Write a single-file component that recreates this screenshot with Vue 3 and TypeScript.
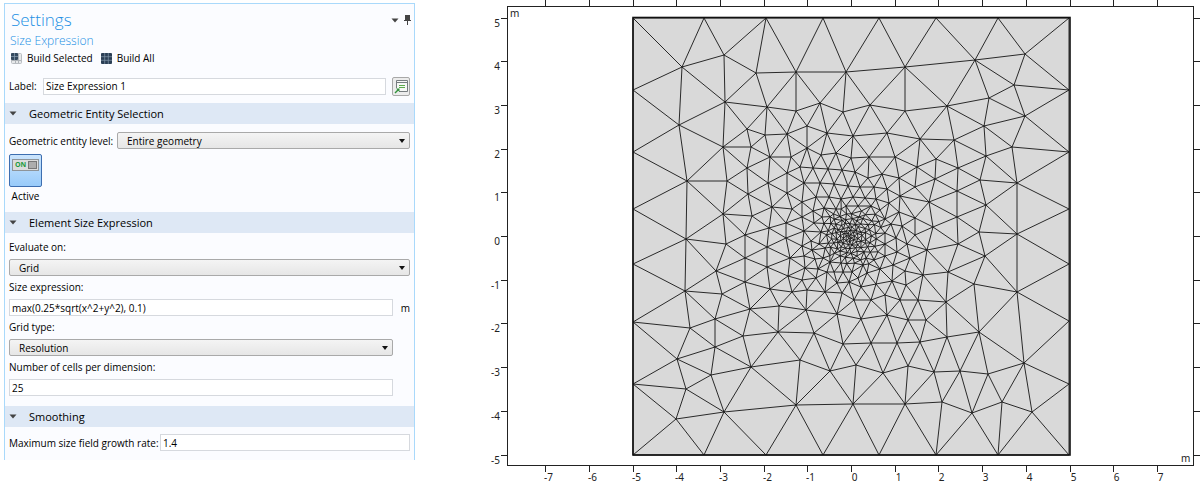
<script setup lang="ts">
import { ref } from 'vue'

type Point = [number, number]

const label = ref('Size Expression 1')
const level = ref('Entire geometry')
const evaluateOn = ref('Grid')
const expression = ref('max(0.25*sqrt(x^2+y^2), 0.1)')
const gridType = ref('Resolution')
const cells = ref('25')
const growthRate = ref('1.4')
const active = ref(true)

const unit = 43.7
const origin: Point = [851, 236]
const yTicks = [5, 4, 3, 2, 1, 0, -1, -2, -3, -4, -5]
const xTicks = [-7, -6, -5, -4, -3, -2, -1, 0, 1, 2, 3, 4, 5, 6, 7]
const tickX = (v: number) => Math.round(origin[0] + v * unit) + 0.5
const tickY = (v: number) => Math.round(origin[1] - v * unit) + 0.5

// Mesh nodes on the boundary of the square and in the coarse part of the domain.
const nodes: Point[] = [
  [633, 18], [704, 18], [766, 18], [823, 18], [879, 18], [936, 18], [998, 18], [1069, 18],
  [633, 90], [633, 152], [633, 209], [633, 264], [633, 322], [633, 384], [633, 455],
  [1069, 90], [1069, 152], [1069, 209], [1069, 264], [1069, 321], [1069, 384], [1069, 455],
  [704, 455], [766, 455], [823, 455], [879, 455], [936, 455], [998, 455],
  [682, 67], [724, 55], [756, 73], [796, 72], [846, 72], [725, 102], [679, 125], [767, 107],
  [796, 111], [820, 103], [843, 112], [747, 129], [765, 135], [787, 134], [807, 126], [827, 133],
  [853, 136], [723, 147], [751, 147], [770, 157], [791, 157], [807, 148], [821, 155], [836, 153], [851, 158],
  [905, 67], [975, 60], [1025, 54], [870, 105], [905, 111], [947, 106], [989, 98], [1014, 85],
  [1025, 116], [984, 126], [887, 133], [920, 139], [954, 140], [1012, 147], [986, 156],
  [869, 157], [895, 157], [936, 159],
  [687, 181], [727, 181], [747, 168], [768, 183], [748, 194], [723, 214], [752, 216], [772, 207],
  [686, 239], [726, 244], [745, 235], [769, 228], [767, 247], [745, 258], [716, 271], [767, 267],
  [745, 282], [685, 291], [722, 294], [770, 289], [750, 309], [715, 319], [779, 306],
  [958, 168], [935, 179], [980, 180], [1017, 183], [957, 191], [929, 202], [986, 205], [957, 217],
  [933, 227], [979, 232], [1017, 234], [958, 244], [985, 256], [948, 272], [974, 284], [1017, 292], [946, 302],
  [690, 328], [715, 347], [743, 336], [778, 332], [814, 333], [837, 314], [843, 344], [677, 359],
  [711, 375], [751, 367], [800, 360], [830, 371], [856, 365], [686, 389], [724, 412], [676, 419],
  [796, 405], [853, 404], [861, 319], [887, 315], [908, 320], [926, 320], [871, 343], [897, 343],
  [920, 342], [947, 337], [979, 332], [1024, 363], [883, 373], [908, 366], [934, 372], [960, 371],
  [988, 374], [905, 404], [942, 402], [1002, 402], [972, 413], [1032, 412],
  [787, 173], [800, 167], [813, 168], [828, 169], [842, 170], [855, 172], [868, 178], [882, 174],
  [899, 178], [917, 167], [804, 183], [787, 193], [820, 183], [834, 184], [848, 186], [860, 187],
  [874, 187], [887, 189], [915, 187], [900, 196], [792, 209], [802, 202], [816, 197], [829, 197],
  [841, 199], [853, 197], [865, 198], [876, 199], [889, 203], [899, 212], [915, 218], [786, 223],
  [802, 217], [813, 211], [824, 208], [836, 209], [846, 206], [858, 206], [871, 206], [880, 210],
  [786, 238], [804, 231], [814, 223], [822, 217], [885, 219], [891, 224], [902, 226], [896, 238],
  [885, 233], [915, 235], [927, 250], [907, 244], [897, 252], [885, 244], [885, 256], [910, 258],
  [923, 275], [802, 246], [811, 241], [790, 258], [804, 256], [812, 250], [788, 276], [805, 268],
  [815, 259], [823, 258], [802, 280], [816, 278], [792, 292], [807, 290], [825, 292], [806, 310],
  [854, 300], [842, 293], [837, 283], [849, 282], [871, 300], [861, 287], [885, 295], [876, 284],
  [892, 281], [900, 300], [918, 300], [906, 285], [905, 271], [893, 265], [880, 269], [867, 273],
  [818, 269], [830, 262], [827, 272], [834, 272], [843, 272], [841, 263], [852, 272], [858, 278],
  [874, 260], [863, 265], [821, 232], [819, 244],
]

// Refined nodes around the origin: rings whose spacing grows with the radius.
const centre: Point = [849, 236]
const refine = (base: Point[]): Point[] => {
  const out = [...base]
  let radius = 0
  let ring = 0
  while (radius < 36) {
    const size = 3.1 + radius * 0.14
    const count = radius === 0 ? 1 : Math.round((2 * Math.PI * radius) / size)
    for (let i = 0; i < count; i++) {
      const wobble = 0.18 * Math.sin(i * 2.7 + ring * 1.9)
      const angle = ((i + ring * 0.5 + wobble) / count) * 2 * Math.PI
      const r = radius + size * 0.1 * Math.sin(i * 4.1 + ring)
      const p: Point = [centre[0] + r * Math.cos(angle), centre[1] + r * Math.sin(angle)]
      if (base.every((q) => Math.hypot(q[0] - p[0], q[1] - p[1]) > size * 0.75)) out.push(p)
    }
    radius += size * 0.87
    ring++
  }
  return out
}

interface Triangle { v: [number, number, number]; cx: number; cy: number; rr: number }

// Incremental Delaunay triangulation; returns the path of all unique edges.
const meshPath = (input: Point[]): string => {
  const n = input.length
  const pts: Point[] = [...input, [-20000, -20000], [22000, -20000], [850, 40000]]
  const make = (a: number, b: number, c: number): Triangle => {
    const [ax, ay] = pts[a]
    const bx = pts[b][0] - ax
    const by = pts[b][1] - ay
    const dx = pts[c][0] - ax
    const dy = pts[c][1] - ay
    const d = 2 * (bx * dy - by * dx) || 1e-9
    const ux = (dy * (bx * bx + by * by) - by * (dx * dx + dy * dy)) / d
    const uy = (bx * (dx * dx + dy * dy) - dx * (bx * bx + by * by)) / d
    return { v: [a, b, c], cx: ax + ux, cy: ay + uy, rr: ux * ux + uy * uy }
  }
  let tris: Triangle[] = [make(n, n + 1, n + 2)]
  for (let i = 0; i < n; i++) {
    const [x, y] = pts[i]
    const edges = new Map<string, Point>()
    const keep: Triangle[] = []
    for (const t of tris) {
      if ((x - t.cx) ** 2 + (y - t.cy) ** 2 < t.rr - 1e-7) {
        for (let k = 0; k < 3; k++) {
          const a = t.v[k]
          const b = t.v[(k + 1) % 3]
          const key = a < b ? `${a}_${b}` : `${b}_${a}`
          if (edges.has(key)) edges.delete(key)
          else edges.set(key, [a, b])
        }
      } else keep.push(t)
    }
    edges.forEach(([a, b]) => keep.push(make(a, b, i)))
    tris = keep
  }
  const seen = new Set<string>()
  let d = ''
  for (const t of tris) {
    if (t.v.some((k) => k >= n)) continue
    for (let k = 0; k < 3; k++) {
      const a = Math.min(t.v[k], t.v[(k + 1) % 3])
      const b = Math.max(t.v[k], t.v[(k + 1) % 3])
      const key = `${a}_${b}`
      if (seen.has(key)) continue
      seen.add(key)
      d += `M${pts[a][0].toFixed(1)} ${pts[a][1].toFixed(1)}L${pts[b][0].toFixed(1)} ${pts[b][1].toFixed(1)}`
    }
  }
  return d
}

const mesh = meshPath(refine(nodes))
</script>

<template>
  <main class="workspace">
    <section class="panel">
      <header class="head">
        <h1>Settings</h1>
        <div class="tools">
          <button type="button" aria-label="Panel menu">
            <svg width="8" height="5" viewBox="0 0 8 5"><path d="M0.5 0.5h7L4 4.5z" fill="#444" /></svg>
          </button>
          <button type="button" aria-label="Pin panel">
            <svg width="7" height="10" viewBox="0 0 7 10"><path d="M1 0h5v5h1v1H4v4H3V6H0V5h1z" fill="#444" /></svg>
          </button>
        </div>
      </header>
      <h2>Size Expression</h2>
      <div class="actions">
        <button type="button">
          <svg width="11" height="11" viewBox="0 0 11 11">
            <rect x="0.5" y="0.5" width="10" height="10" rx="1" fill="#e6e8ea" stroke="#b9bdc2" />
            <path d="M4 7.5h6M7.5 1v9M1 7.5h3M4.5 7v3" stroke="#aeb3b8" />
            <rect width="7" height="7" rx="1" fill="#34495e" />
            <path d="M3.5 0v7M0 3.5h7" stroke="#8ca0b4" stroke-width="0.7" />
          </svg>
          Build Selected
        </button>
        <button type="button">
          <svg width="11" height="11" viewBox="0 0 11 11">
            <rect width="11" height="11" rx="1" fill="#2b3f55" />
            <path d="M3.7 0v11M7.3 0v11M0 3.7h11M0 7.3h11" stroke="#8497ab" stroke-width="0.7" />
          </svg>
          Build All
        </button>
      </div>
      <div class="row label-row">
        <label for="label">Label:</label>
        <input id="label" v-model="label" type="text" />
        <button class="square" type="button" aria-label="Show name and label">
          <svg width="15" height="15" viewBox="0 0 15 15">
            <path d="M2.5 9V1.5h11v11H5" fill="#f6f8f6" stroke="#777d80" />
            <path d="M2.5 3.5h11" stroke="#777d80" />
            <path d="M5 6.5h6M5 8.5h6" stroke="#5cab4c" />
            <path d="M1 14l3.5-3.5" stroke="#33913c" stroke-width="1.4" />
            <path d="M2 9.5h3.5V13z" fill="#33913c" />
          </svg>
        </button>
      </div>

      <h3><svg width="8" height="5" viewBox="0 0 8 5"><path d="M0.5 0.5h7L4 4.5z" fill="#444" /></svg>Geometric Entity Selection</h3>
      <div class="row level-row">
        <label for="level">Geometric entity level:</label>
        <span class="select">
          <select id="level" v-model="level"><option>Entire geometry</option></select>
        </span>
      </div>
      <div class="toggle">
        <button id="active" type="button" :aria-pressed="active" aria-labelledby="active-label" @click="active = !active">
          <span class="switch"><b>ON</b><i></i></span>
        </button>
        <label id="active-label" for="active">Active</label>
      </div>

      <h3><svg width="8" height="5" viewBox="0 0 8 5"><path d="M0.5 0.5h7L4 4.5z" fill="#444" /></svg>Element Size Expression</h3>
      <div class="fields">
        <label for="evaluate">Evaluate on:</label>
        <span class="select">
          <select id="evaluate" v-model="evaluateOn"><option>Grid</option></select>
        </span>
        <label for="expression">Size expression:</label>
        <div class="with-unit">
          <input id="expression" v-model="expression" type="text" />
          <span>m</span>
        </div>
        <label for="grid-type">Grid type:</label>
        <span class="select inset">
          <select id="grid-type" v-model="gridType"><option>Resolution</option></select>
        </span>
        <label for="cells">Number of cells per dimension:</label>
        <div class="inset"><input id="cells" v-model="cells" type="text" /></div>
      </div>

      <h3><svg width="8" height="5" viewBox="0 0 8 5"><path d="M0.5 0.5h7L4 4.5z" fill="#444" /></svg>Smoothing</h3>
      <div class="row rate-row">
        <label for="rate">Maximum size field growth rate:</label>
        <input id="rate" v-model="growthRate" type="text" />
      </div>
    </section>

    <svg class="plot" viewBox="480 0 720 481" role="img" aria-label="Mesh plot">
      <rect x="633" y="18" width="436" height="437" fill="#d9d9d9" />
      <path :d="mesh" class="mesh" />
      <rect x="633" y="17.5" width="437" height="437.5" class="outline" />
      <rect x="507.5" y="6.5" width="686" height="459" class="frame" />
      <g v-for="v in yTicks" :key="`y${v}`">
        <path :d="`M501 ${tickY(v)}h6M1194 ${tickY(v)}h6`" class="frame" />
        <text x="500" :y="tickY(v) + 8" text-anchor="end">{{ v }}</text>
      </g>
      <g v-for="v in xTicks" :key="`x${v}`">
        <path :d="`M${tickX(v)} 0v6M${tickX(v)} 466v6`" class="frame" />
        <text :x="tickX(v) + 3" y="481" text-anchor="middle">{{ v }}</text>
      </g>
      <text x="510" y="17">m</text>
      <text x="1181" y="462">m</text>
    </svg>
  </main>
</template>

<style>
body {
  background: #fff;
}
</style>

<style scoped>
.workspace {
  display: grid;
  grid-template-columns: minmax(0, 411fr) minmax(0, 720fr);
  column-gap: 65px;
  align-items: start;
  padding-left: 4px;
  font-family: "Open Sans", "Noto Sans", sans-serif;
  font-size: 10px;
  line-height: 16px;
  color: #000;
}
.panel {
  box-sizing: border-box;
  margin-top: 3px;
  padding-bottom: 9px;
  border: 1px solid #a9d9fb;
  border-bottom: 0;
  background: #fbfcff;
}
.panel button,
.panel input,
.panel select {
  box-sizing: border-box;
  font: inherit;
  color: inherit;
}
.panel button {
  padding: 0;
  border: 0;
  background: none;
}
.panel svg {
  display: block;
  flex: none;
}
.head {
  display: flex;
  justify-content: space-between;
  padding: 4px 3px 0 6px;
}
h1,
h2,
h3 {
  margin: 0;
  font-weight: 400;
}
h1 {
  font-size: 17px;
  line-height: 24px;
  font-weight: 300;
  color: #2390e4;
}
h2 {
  padding-left: 5px;
  font-size: 12px;
  line-height: 18px;
  font-weight: 300;
  color: #2390e4;
}
.tools {
  display: flex;
  align-items: center;
  gap: 5px;
}
.actions {
  display: flex;
  gap: 8px;
  padding-left: 6px;
}
.actions button {
  display: flex;
  align-items: center;
  gap: 5px;
  height: 16px;
}
.row {
  display: flex;
  align-items: center;
  padding: 0 4px;
}
.row label {
  flex: none;
}
.row input,
.row .select {
  flex: 1;
  min-width: 0;
}
.label-row {
  gap: 6px;
  margin: 10px 0 7px;
  height: 20px;
}
.label-row label {
  width: 28px;
}
.panel .square {
  display: grid;
  place-items: center;
  width: 18px;
  height: 19px;
  border: 1px solid #a8a8a8;
  border-radius: 2px;
  background: #ececec;
}
input {
  display: block;
  width: 100%;
  height: 17px;
  padding: 0 2px;
  border: 1px solid #d6d9de;
  background: #fff;
}
h3 {
  display: flex;
  align-items: center;
  gap: 12px;
  height: 21px;
  padding-left: 4px;
  font-size: 11px;
  background: #dee8f5;
}
.select {
  position: relative;
  display: block;
}
.select::after {
  content: "";
  position: absolute;
  right: 5px;
  top: 7px;
  border: 3px solid transparent;
  border-top: 4px solid #111;
  border-bottom: 0;
  pointer-events: none;
}
select {
  display: block;
  width: 100%;
  height: 17px;
  padding: 0 9px;
  border: 1px solid #a9a9a9;
  border-radius: 2px;
  background: linear-gradient(#f4f4f4, #e6e6e6);
  appearance: none;
  line-height: 14px;
}
.level-row {
  gap: 6px;
  padding-top: 8px;
}
.level-row label {
  width: 102px;
  white-space: nowrap;
}
.toggle {
  width: 33px;
  margin: 5px 0 8px 4px;
  text-align: center;
}
.toggle button {
  display: flex;
  align-items: flex-start;
  width: 33px;
  height: 33px;
  margin-bottom: 1px;
  padding: 4px 2px;
  border: 1px solid #3d6eb0;
  border-radius: 2px;
  background: linear-gradient(#cbe4fc, #98cbfa);
}
.toggle label {
  display: block;
}
.switch {
  display: flex;
  align-items: center;
  justify-content: space-between;
  flex: 1;
  box-sizing: border-box;
  height: 12px;
  padding: 1px 1px 1px 2px;
  border: 1px solid #8e9499;
  background: #dcdcdc;
}
.switch b {
  font-size: 7px;
  line-height: 8px;
  color: #1d9b40;
}
.switch i {
  box-sizing: border-box;
  width: 9px;
  height: 8px;
  border: 1px solid #777;
  background: #adadad;
}
.fields {
  padding: 6px 4px 7px;
}
.fields label {
  display: block;
}
.fields .select,
.fields .with-unit,
.fields .inset {
  margin: 4px 0 3px;
}
.with-unit {
  display: flex;
  align-items: center;
  justify-content: space-between;
  height: 17px;
}
.with-unit input {
  width: calc(100% - 17px);
}
.fields .inset {
  margin-right: 17px;
}
.rate-row {
  gap: 3px;
  padding-top: 7px;
}
.rate-row label {
  width: 148px;
  white-space: nowrap;
}
.plot {
  display: block;
  width: 100%;
  height: auto;
}
.plot text {
  font-family: "Noto Sans", sans-serif;
  font-size: 10px;
  fill: #222;
}
.mesh {
  fill: none;
  stroke: #151515;
  stroke-width: 0.9;
}
.outline {
  fill: none;
  stroke: #111;
  stroke-width: 1.6;
}
.frame {
  fill: none;
  stroke: #222;
}
</style>
